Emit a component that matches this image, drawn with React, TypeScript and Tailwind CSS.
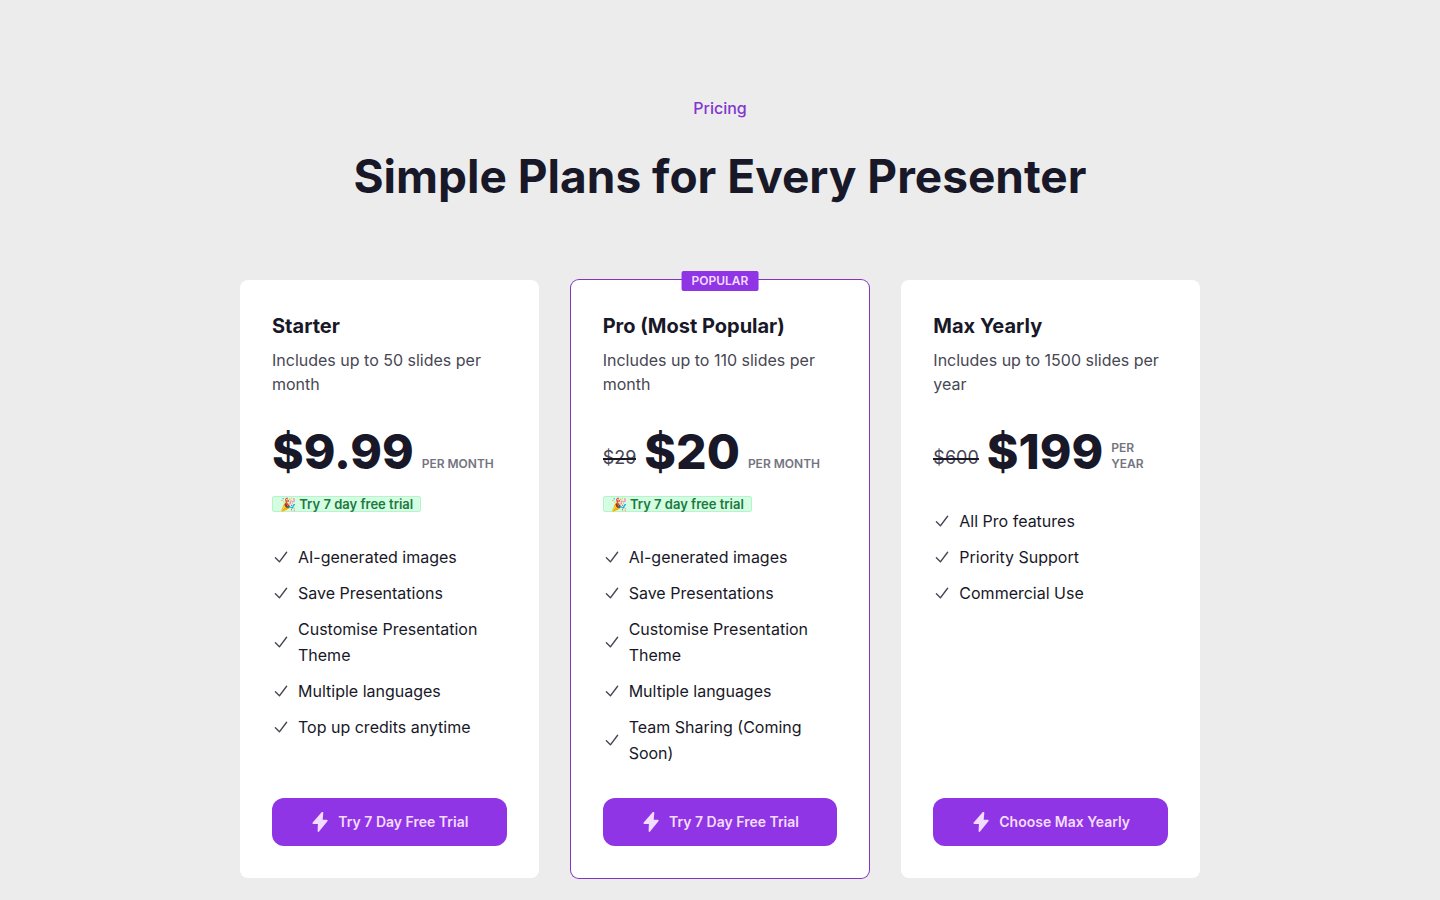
import clsx from "clsx";

type Plan = {
  name: string
  description: string
  price: string
  priceAnchor?: string
  period: string
  trial?: boolean
  isFeatured?: boolean
  features: string[]
  cta: string
}

const plans: Plan[] = [
  {
    name: "Starter",
    description: "Includes up to 50 slides per month",
    price: "$9.99",
    period: "per month",
    trial: true,
    features: [
      "AI-generated images",
      "Save Presentations",
      "Customise Presentation Theme",
      "Multiple languages",
      "Top up credits anytime",
    ],
    cta: "Try 7 Day Free Trial",
  },
  {
    name: "Pro (Most Popular)",
    description: "Includes up to 110 slides per month",
    price: "$20",
    priceAnchor: "$29",
    period: "per month",
    trial: true,
    isFeatured: true,
    features: [
      "AI-generated images",
      "Save Presentations",
      "Customise Presentation Theme",
      "Multiple languages",
      "Team Sharing (Coming Soon)",
    ],
    cta: "Try 7 Day Free Trial",
  },
  {
    name: "Max Yearly",
    description: "Includes up to 1500 slides per year",
    price: "$199",
    priceAnchor: "$600",
    period: "per year",
    features: ["All Pro features", "Priority Support", "Commercial Use"],
    cta: "Choose Max Yearly",
  },
]

function CheckIcon() {
  return (
    <svg viewBox="0 0 20 20" fill="currentColor" className="w-[18px] h-[18px] opacity-80 shrink-0" aria-hidden="true">
      <path
        fillRule="evenodd"
        clipRule="evenodd"
        d="M16.704 4.153a.75.75 0 01.143 1.052l-8 10.5a.75.75 0 01-1.127.075l-4.5-4.5a.75.75 0 011.06-1.06l3.894 3.893 7.48-9.817a.75.75 0 011.05-.143z"
      />
    </svg>
  )
}

function BoltIcon() {
  return (
    <svg viewBox="0 0 20 20" fill="currentColor" className="w-5 h-5 shrink-0" aria-hidden="true">
      <path d="M11.6.3 2.7 10.6c-.5.7-.2 1.500.7 1.500h4.500L7.600 19c0 1 .9 1.300 1.500.6l8.300-10.300c.6-.8.2-1.600-.7-1.600h-4L13.300 1c.1-1-1-1.500-1.700-.7z" />
    </svg>
  )
}

function PlanCard({ plan }: { plan: Plan }) {
  return (
    <div
      className={clsx(
        "relative flex flex-col gap-8 rounded-lg bg-white p-8",
        plan.isFeatured && "ring-1 ring-[#8235c4]"
      )}
    >
      {plan.isFeatured &&
        <span className="absolute left-1/2 -top-[9px] -translate-x-1/2 rounded-xs bg-[#8f35e5] px-2.5 text-xs leading-5 font-semibold text-[#f3dcff]">
          POPULAR
        </span>
      }
      {/* Heading */}
      <div className="flex flex-col gap-5">
        <div>
          <h2 className="text-xl font-bold">{plan.name}</h2>
          <p className="mt-2 text-[#474754]">{plan.description}</p>
        </div>
        {/* Price */}
        <div>
          <div className="flex items-end gap-2 pt-3">
            {plan.priceAnchor &&
              <p className="relative mb-1 text-lg leading-7 text-[#474754]">
                <span className="absolute inset-x-0 top-1/2 h-0.5 bg-[#181828]" />
                {plan.priceAnchor}
              </p>
            }
            <p className="text-5xl font-extrabold">{plan.price}</p>
            <p className="mb-1 text-xs font-semibold uppercase text-[#747480]">{plan.period}</p>
          </div>
          {plan.trial &&
            <span className="mt-5 flex h-4 w-fit items-center rounded-xs border border-[#b5f5cb] bg-[#d5fde2] px-[7px] text-[13px] leading-4 font-semibold text-[#1a7a41]">
              🎉 Try 7 day free trial
            </span>
          }
        </div>
      </div>
      {/* Features */}
      <ul className="flex-1 space-y-2.5 leading-[26px]">
        {plan.features.map(feature => (
          <li key={feature} className="flex items-center gap-2">
            <CheckIcon />
            <span>{feature}</span>
          </li>
        ))}
      </ul>
      <button type="button" className="flex h-12 items-center justify-center gap-2 rounded-xl bg-[#8f35e5] text-sm font-semibold text-[#f3dcff] cursor-pointer">
        <BoltIcon />
        {plan.cta}
      </button>
    </div>
  )
}

export default function App() {
  return (
    <main className="min-h-screen bg-[#ececec] font-['Inter',sans-serif] text-[#181828]">
      <section className="mx-auto max-w-5xl px-8 pt-24 pb-5" id="pricing">
        <div className="mb-20 text-center">
          <p className="mb-8 font-medium text-[#8235d0]">Pricing</p>
          <h1 className="text-[46px] leading-12 font-bold">Simple Plans for Every Presenter</h1>
        </div>
        <div className="grid gap-8 md:grid-cols-3">
          {plans.map(plan => <PlanCard key={plan.name} plan={plan} />)}
        </div>
      </section>
    </main>
  )
}
